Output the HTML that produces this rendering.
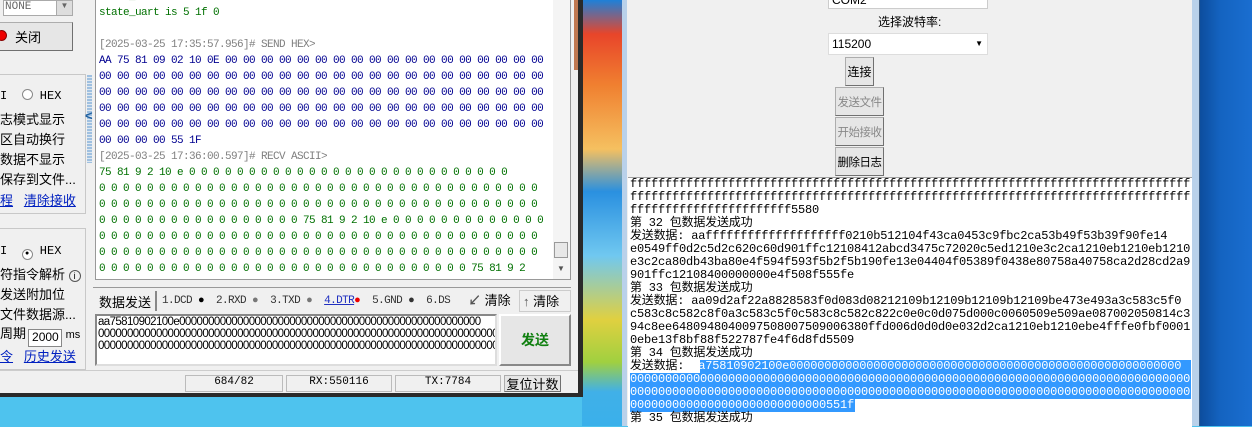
<!DOCTYPE html>
<html><head><meta charset="utf-8"><style>
*{margin:0;padding:0;box-sizing:border-box}
body{width:1252px;height:426px;overflow:hidden;position:relative;background:#4ec3ee;font-family:"Liberation Sans","Noto Sans CJK SC",sans-serif;font-size:12px}
.a{position:absolute}
.m{font-family:"Liberation Mono","Noto Sans CJK SC",monospace;white-space:nowrap}
.btn{position:absolute;background:#e6e6e6;border:1px solid #adadad;border-right-color:#707070;border-bottom-color:#707070;display:flex;align-items:center;justify-content:center;font-size:12px;white-space:nowrap}
.rl{position:absolute;left:630px;font-size:12px;letter-spacing:-0.2px;height:13px;line-height:13px;color:#000}
.gl{position:absolute;left:99px;font-size:11px;letter-spacing:-0.6px;line-height:16px;height:16px}
.sl{position:absolute;left:0;font-size:13px;color:#000;white-space:nowrap}
</style></head><body>
<div class="a" style="left:582px;top:0;width:42px;height:426px;background:linear-gradient(180deg,#1e80d8 0,#e8452a 8%,#f08030 20%,#f5c060 35%,#2a90e0 45%,#70c8f0 60%,#e0d040 75%,#a0d040 85%,#40b0e8 92%,#3ab0ea 100%)"></div>
<div class="a" style="left:1199px;top:0;width:53px;height:426px;background:linear-gradient(90deg,#0c4c9c,#1463c0 40%,#1a6ed0)"></div>

<div class="a" style="left:0;top:0;width:583px;height:397px;background:#f0f0f0;border-right:5px solid #2a2a2a;border-bottom:4px solid #2a2a2a"></div>
<div class="a" style="left:574px;top:0;width:4px;height:70px;background:#c07850"></div>
<div class="a" style="left:3px;top:0;width:70px;height:16px;background:#fff;border:1px solid #aaa"></div>
<div class="a m" style="left:5px;top:1px;font-size:11px;color:#666">NONE</div>
<div class="a" style="left:56px;top:1px;width:16px;height:14px;background:#ddd;border-left:1px solid #aaa;font-size:8px;text-align:center;color:#666">▼</div>
<div class="btn" style="left:-2px;top:22px;width:75px;height:29px;justify-content:flex-start;padding-left:16px;font-size:13px">关闭</div>
<div class="a" style="left:-4px;top:30px;width:11px;height:11px;border-radius:50%;background:#e00;border:1px solid #800"></div>
<div class="a" style="left:-2px;top:74px;width:88px;height:140px;border:1px solid #c8c8c8"></div>
<div class="a" style="left:-2px;top:228px;width:88px;height:142px;border:1px solid #c8c8c8"></div>
<div class="sl" style="top:89px;font-family:'Liberation Mono';font-size:12px">I &nbsp;<span style="display:inline-block;width:11px;height:11px;border:1px solid #888;border-radius:50%;background:#fff;vertical-align:-1px"></span> HEX</div>
<div class="sl" style="top:109px">志模式显示</div>
<div class="sl" style="top:129px">区自动换行</div>
<div class="sl" style="top:149px">数据不显示</div>
<div class="sl" style="top:169px">保存到文件...</div>
<div class="sl" style="top:190px;color:#0020c0"><u>程</u> &nbsp;&nbsp;<u>清除接收</u></div>
<div class="sl" style="top:244px;font-family:'Liberation Mono';font-size:12px">I &nbsp;<span style="display:inline-block;width:11px;height:11px;border:1px solid #888;border-radius:50%;background:#fff;vertical-align:-1px;text-align:center;font-size:7px;line-height:9px">●</span> HEX</div>
<div class="sl" style="top:264px">符指令解析 <span style="display:inline-block;width:12px;height:12px;border:1px solid #555;border-radius:50%;font-size:9px;text-align:center;line-height:10px">i</span></div>
<div class="sl" style="top:284px">发送附加位</div>
<div class="sl" style="top:304px">文件数据源...</div>
<div class="sl" style="top:323px">周期<span style="display:inline-block;width:34px;height:18px;border:1px solid #888;background:#fff;font-size:12px;margin-left:2px;padding-left:3px;vertical-align:-3px">2000</span> <span style="font-size:11px">ms</span></div>
<div class="sl" style="top:346px;color:#0020c0"><u>令</u> &nbsp;&nbsp;<u>历史发送</u></div>
<div class="a" style="left:87px;top:75px;width:5px;height:88px;background:repeating-linear-gradient(180deg,#9fc0e0 0 2px,#dfe8f0 2px 3px)"></div>
<div class="a" style="left:85px;top:108px;font-size:13px;color:#2060a0;font-weight:bold">&lt;</div>
<div class="a" style="left:95px;top:0;width:476px;height:280px;background:#fff;border:1px solid #999;border-top:none"></div>
<div style="position:absolute;left:96px;top:0;width:457px;height:279px;overflow:hidden">
<div style="position:absolute;left:-96px;top:0;width:700px;height:279px">
<div class="gl m" style="top:-11px;color:#007000">state_uart is 5  1f  0</div>
<div class="gl m" style="top:5px;color:#007000">state_uart is 5  1f  0</div>
<div class="gl m" style="top:37px;color:#808080">[2025-03-25 17:35:57.956]# SEND HEX&gt;</div>
<div class="gl m" style="top:53px;color:#000090">AA 75 81 09 02 10 0E 00 00 00 00 00 00 00 00 00 00 00 00 00 00 00 00 00 00</div>
<div class="gl m" style="top:69px;color:#000090">00 00 00 00 00 00 00 00 00 00 00 00 00 00 00 00 00 00 00 00 00 00 00 00 00</div>
<div class="gl m" style="top:85px;color:#000090">00 00 00 00 00 00 00 00 00 00 00 00 00 00 00 00 00 00 00 00 00 00 00 00 00</div>
<div class="gl m" style="top:101px;color:#000090">00 00 00 00 00 00 00 00 00 00 00 00 00 00 00 00 00 00 00 00 00 00 00 00 00</div>
<div class="gl m" style="top:117px;color:#000090">00 00 00 00 00 00 00 00 00 00 00 00 00 00 00 00 00 00 00 00 00 00 00 00 00</div>
<div class="gl m" style="top:133px;color:#000090">00 00 00 00 55 1F</div>
<div class="gl m" style="top:149px;color:#808080">[2025-03-25 17:36:00.597]# RECV ASCII&gt;</div>
<div class="gl m" style="top:165px;color:#007000">75 81 9 2 10 e 0 0 0 0 0 0 0 0 0 0 0 0 0 0 0 0 0 0 0 0 0 0 0 0 0 0 0</div>
<div class="gl m" style="top:181px;color:#007000">0 0 0 0 0 0 0 0 0 0 0 0 0 0 0 0 0 0 0 0 0 0 0 0 0 0 0 0 0 0 0 0 0 0 0 0 0</div>
<div class="gl m" style="top:197px;color:#007000">0 0 0 0 0 0 0 0 0 0 0 0 0 0 0 0 0 0 0 0 0 0 0 0 0 0 0 0 0 0 0 0 0 0 0 0 0</div>
<div class="gl m" style="top:213px;color:#007000">0 0 0 0 0 0 0 0 0 0 0 0 0 0 0 0 0 75 81 9 2 10 e 0 0 0 0 0 0 0 0 0 0 0 0 0</div>
<div class="gl m" style="top:229px;color:#007000">0 0 0 0 0 0 0 0 0 0 0 0 0 0 0 0 0 0 0 0 0 0 0 0 0 0 0 0 0 0 0 0 0 0 0 0 0</div>
<div class="gl m" style="top:245px;color:#007000">0 0 0 0 0 0 0 0 0 0 0 0 0 0 0 0 0 0 0 0 0 0 0 0 0 0 0 0 0 0 0 0 0 0 0 0 0</div>
<div class="gl m" style="top:261px;color:#007000">0 0 0 0 0 0 0 0 0 0 0 0 0 0 0 0 0 0 0 0 0 0 0 0 0 0 0 0 0 0 0 75 81 9 2</div>
</div></div>
<div class="a" style="left:553px;top:0;width:17px;height:279px;background:#f4f4f4"></div>
<div class="a" style="left:554px;top:242px;width:14px;height:16px;background:#e8e8e8;border:1px solid #999"></div>
<div class="a" style="left:557px;top:264px;font-size:8px;color:#555">▼</div>
<div class="a" style="left:93px;top:287px;width:478px;height:1px;background:#999"></div>
<div class="a" style="left:94px;top:290px;width:62px;height:22px;font-size:13px;padding:2px 5px">数据发送</div>
<div class="a" style="left:155px;top:291px;width:2px;height:20px;background:#888"></div>
<div class="a m" style="left:162px;top:295px;font-size:11px;letter-spacing:-0.6px;color:#333">1.DCD <span style="color:#000">●</span> &nbsp;2.RXD <span style="color:#777">●</span> &nbsp;3.TXD <span style="color:#777">●</span> &nbsp;<u style="color:#2030c0">4.DTR</u><span style="color:#e00">●</span> &nbsp;5.GND <span>●</span> &nbsp;6.DS</div>
<div class="a" style="left:463px;top:290px;width:108px;height:22px;background:#f0f0f0"></div>
<div class="a" style="left:468px;top:290px;font-size:13px"><span style="color:#555;font-weight:bold">↙</span> 清除</div>
<div class="a" style="left:519px;top:290px;width:52px;height:22px;border:1px solid #ccc;font-size:13px;padding-left:3px"><span style="color:#555;font-weight:bold">↑</span> 清除</div>
<div class="a" style="left:95px;top:314px;width:402px;height:52px;background:#fff;border:2px solid #888;border-right-color:#ddd;border-bottom-color:#ddd;overflow:hidden"></div>
<div class="a" style="left:98px;top:316px;width:397px;overflow:hidden;font-family:'Liberation Sans';font-size:11.5px;line-height:12px;letter-spacing:-0.6px;white-space:nowrap">aa75810902100e0000000000000000000000000000000000000000000000000000<br>000000000000000000000000000000000000000000000000000000000000000000000<br>000000000000000000000000000000000000000000000000000000000000000000000</div>
<div class="btn" style="left:499px;top:314px;width:72px;height:52px;color:#108010;font-weight:bold;font-size:14px;border:2px solid #fff;border-right-color:#888;border-bottom-color:#888">发送</div>
<div class="a" style="left:0;top:370px;width:578px;height:1px;background:#ccc"></div>
<div class="a" style="left:185px;top:375px;width:98px;height:17px;border:1px solid #bbb;text-align:center;font-size:11px;font-family:'Liberation Mono'">684/82</div>
<div class="a" style="left:286px;top:375px;width:106px;height:17px;border:1px solid #bbb;text-align:center;font-size:11px;font-family:'Liberation Mono'">RX:550116</div>
<div class="a" style="left:395px;top:375px;width:106px;height:17px;border:1px solid #bbb;text-align:center;font-size:11px;font-family:'Liberation Mono'">TX:7784</div>
<div class="btn" style="left:504px;top:375px;width:57px;height:17px;font-size:13px">复位计数</div>

<div class="a" style="left:622px;top:0;width:578px;height:426px;background:#b9d1ea;border-right:1px solid #3a5a80"></div>
<div class="a" style="left:627px;top:0;width:565px;height:426px;background:#f0f0f0"></div>
<div class="a" style="left:828px;top:-8px;width:160px;height:17px;background:#fff;border:1px solid #ccc;padding-left:3px;font-size:12px">COM2</div>
<div class="a" style="left:878px;top:13px;font-size:12px">选择波特率:</div>
<div class="a" style="left:828px;top:33px;width:160px;height:22px;background:#fff;border:1px solid #ddd;padding:3px 3px;font-size:12px">115200<span style="position:absolute;right:4px;top:5px;font-size:8px">▼</span></div>
<div class="btn" style="left:845px;top:57px;width:29px;height:29px">连接</div>
<div class="btn" style="left:835px;top:87px;width:49px;height:29px;color:#888;font-size:11.5px;letter-spacing:-0.5px">发送文件</div>
<div class="btn" style="left:835px;top:117px;width:49px;height:29px;color:#888;font-size:11.5px;letter-spacing:-0.5px">开始接收</div>
<div class="btn" style="left:835px;top:147px;width:49px;height:29px;font-size:11.5px;letter-spacing:-0.5px">删除日志</div>
<div class="a" style="left:628px;top:177px;width:564px;height:250px;background:#fff;border-top:1px solid #a0a0a0"></div>
<div class="a" style="left:700px;top:360px;width:491px;height:13px;background:#3399ff"></div>
<div class="a" style="left:630px;top:373px;width:561px;height:26px;background:#3399ff"></div>
<div class="a" style="left:630px;top:399px;width:225px;height:13px;background:#3399ff"></div>
<div style="position:absolute;left:0;top:0;width:1191px;height:426px;overflow:hidden">
<div class="rl m" style="top:178px">ffffffffffffffffffffffffffffffffffffffffffffffffffffffffffffffffffffffffffffffffff</div>
<div class="rl m" style="top:191px">ffffffffffffffffffffffffffffffffffffffffffffffffffffffffffffffffffffffffffffffffff</div>
<div class="rl m" style="top:204px">fffffffffffffffffffffff5580</div>
<div class="rl m" style="top:217px">第 32 包数据发送成功</div>
<div class="rl m" style="top:230px">发送数据: aaffffffffffffffffffff0210b512104f43ca0453c9fbc2ca53b49f53b39f90fe14</div>
<div class="rl m" style="top:243px">e0549ff0d2c5d2c620c60d901ffc12108412abcd3475c72020c5ed1210e3c2ca1210eb1210eb1210</div>
<div class="rl m" style="top:256px">e3c2ca80db43ba80e4f594f593f5b2f5b190fe13e04404f05389f0438e80758a40758ca2d28cd2a9</div>
<div class="rl m" style="top:269px">901ffc12108400000000e4f508f555fe</div>
<div class="rl m" style="top:282px">第 33 包数据发送成功</div>
<div class="rl m" style="top:295px">发送数据: aa09d2af22a8828583f0d083d08212109b12109b12109b12109be473e493a3c583c5f0</div>
<div class="rl m" style="top:308px">c583c8c582c8f0a3c583c5f0c583c8c582c822c0e0c0d075d000c0060509e509ae087002050814c3</div>
<div class="rl m" style="top:321px">94c8ee6480948040097508007509006380ffd006d0d0d0e032d2ca1210eb1210ebe4fffe0fbf0001</div>
<div class="rl m" style="top:334px">0ebe13f8bf88f522787fe4f6d8fd5509</div>
<div class="rl m" style="top:347px">第 34 包数据发送成功</div>
<div class="rl m" style="top:360px">发送数据: <span style="color:#fff">aa75810902100e00000000000000000000000000000000000000000000000000000000</span></div>
<div class="rl m" style="top:373px;color:#fff">00000000000000000000000000000000000000000000000000000000000000000000000000000000</div>
<div class="rl m" style="top:386px;color:#fff">00000000000000000000000000000000000000000000000000000000000000000000000000000000</div>
<div class="rl m" style="top:399px;color:#fff">0000000000000000000000000000551f</div>
<div class="rl m" style="top:412px">第 35 包数据发送成功</div>
</div>
</body></html>
